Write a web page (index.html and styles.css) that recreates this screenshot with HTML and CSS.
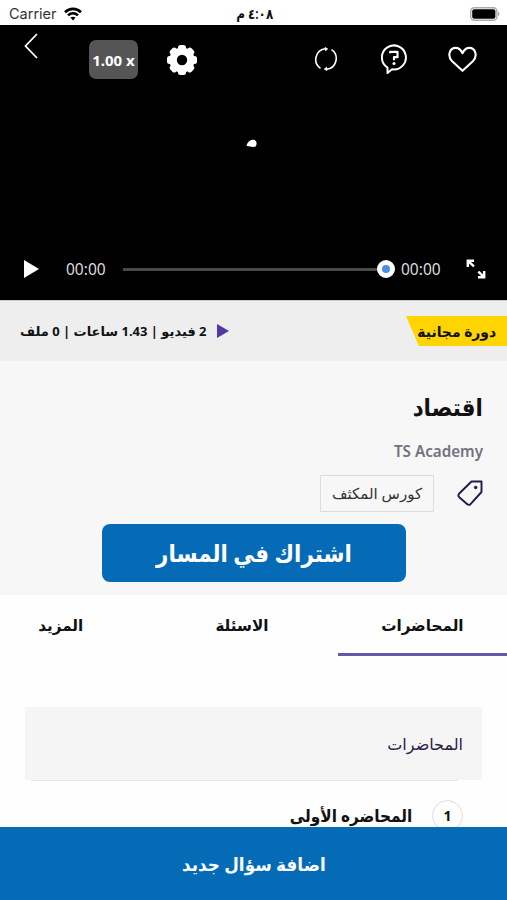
FILE: index.html
```html
<!DOCTYPE html>
<html lang="ar" dir="rtl">
<head>
  <meta charset="UTF-8">
  <meta name="viewport" content="width=device-width, initial-scale=1.0">
  <title>اقتصاد - TS Academy</title>
  <link rel="stylesheet" href="styles.css">
</head>
<body>
  <div class="app">
    <header class="status-bar" dir="ltr">
      <div class="carrier">
        <span>Carrier</span>
        <svg class="wifi" viewBox="0 0 18 14" fill="none" stroke="#000" stroke-width="2.6">
          <path d="M1 5.2C5.6.7 12.4.7 17 5.2"/>
          <path d="M4 8.4c3-2.7 7-2.7 10 0"/>
          <path d="M9 13.5l-2.6-2.9c1.5-1.3 3.7-1.3 5.2 0z" fill="#000" stroke="none"/>
        </svg>
      </div>
      <span class="clock" dir="rtl">٤:٠٨ م</span>
      <svg class="battery" viewBox="0 0 30 14">
        <rect x=".7" y=".7" width="26.2" height="12.6" rx="3.5" fill="#fff" stroke="#aaa" stroke-width="1.4"/>
        <rect x="2.2" y="2.2" width="23.2" height="9.6" rx="2" fill="#000"/>
        <path d="M28 4.8c1.9.5 1.9 3.9 0 4.4z" fill="#aaa"/>
      </svg>
    </header>

    <section class="player" dir="ltr">
      <div class="player-top">
        <svg class="icon-back" viewBox="0 0 14 26" fill="none" stroke="#fff" stroke-width="1.8">
          <path d="M13 1L1.5 13 13 25"/>
        </svg>
        <button class="speed-btn">1.00 x</button>
        <svg class="icon-gear" viewBox="0 0 30 30">
          <g fill="#fff">
            <circle cx="15" cy="15" r="12.6"/>
            <rect x="11" y="0" width="8" height="30" rx="2.5"/>
            <rect x="11" y="0" width="8" height="30" rx="2.5" transform="rotate(45 15 15)"/>
            <rect x="11" y="0" width="8" height="30" rx="2.5" transform="rotate(90 15 15)"/>
            <rect x="11" y="0" width="8" height="30" rx="2.5" transform="rotate(135 15 15)"/>
          </g>
          <circle cx="15" cy="15" r="5.2" fill="#000"/>
        </svg>
        <svg class="icon-refresh" viewBox="0 0 24 24" fill="none" stroke="#fff" stroke-width="1.6">
          <path d="M6.5 21.3A10.7 10.7 0 0 1 11.5 1.8"/>
          <path d="M17.5 2.7A10.7 10.7 0 0 1 12.5 22.2"/>
          <path d="M11 .6l2.6 1.3-2.1 1.8zM13 23.4l-2.6-1.3 2.1-1.8z" fill="#fff" stroke-width="1"/>
        </svg>
        <svg class="icon-question" viewBox="0 0 28 30" fill="none" stroke="#fff" stroke-width="2">
          <path d="M7.5 23.6A12 12 0 1 1 12 25.3L7.5 29z" stroke-linejoin="round"/>
          <path d="M10.2 9.3V7.8h7.3v5.4H14v3" stroke-width="2.2" stroke-linejoin="round"/>
          <circle cx="14" cy="19.5" r="1.5" fill="#fff" stroke="none"/>
        </svg>
        <svg class="icon-heart" viewBox="0 0 30 27" fill="none" stroke="#fff" stroke-width="2.2" stroke-linejoin="round">
          <path d="M15 25.2L4.3 15.4C-1 10 1.5 1.5 8 1.5c3.2 0 5.5 2.3 7 5.5 1.5-3.2 3.8-5.5 7-5.5 6.5 0 9 8.5 3.7 13.9z"/>
        </svg>
      </div>

      <svg class="spinner" viewBox="0 0 12 9" fill="#fff">
        <path d="M.5 6.8C1.5 3 4 .8 7 .8a3.600 3.600 0 0 1 0 7.200C5 8 3.500 7.300.5 6.800z"/>
      </svg>

      <div class="player-controls">
        <svg class="icon-play" viewBox="0 0 15 18" fill="#fff"><path d="M0 0l15 9L0 18z"/></svg>
        <span class="time">00:00</span>
        <div class="seek-bar"><span class="seek-thumb"></span></div>
        <span class="time">00:00</span>
        <svg class="icon-expand" viewBox="0 0 20 20" fill="none" stroke="#fff" stroke-width="2.4">
          <path d="M1.8 8V1.8H8M2 2l6 5.300M18.200 12v6.200H12M12.300 12.700l5.700 5.300"/>
        </svg>
      </div>
    </section>

    <section class="info-bar">
      <div class="free-badge"><span class="ar free-text">دورة مجانية</span></div>
      <div class="stats">
        <svg class="icon-stats" viewBox="0 0 12 14" fill="#5138a5"><path d="M0 0l12 7-12 7z"/></svg>
        <span class="ar stats-text">2 فيديو | 1.43 ساعات | 0 ملف</span>
      </div>
    </section>

    <section class="course">
      <h1 class="ar course-title">اقتصاد</h1>
      <p class="academy">TS Academy</p>
      <div class="tags">
        <svg class="icon-tag" viewBox="0 0 26 26" fill="none" stroke="#211a4b" stroke-width="1.9" stroke-linejoin="round">
          <path d="M14.5 1.5H24.500V12L13.500 24.200Q11.700 25.600 10 24L2 17Q.7 15.500 2 13.800z"/>
          <circle cx="18.700" cy="7.500" r="1.300" fill="#211a4b" stroke-width="1"/>
        </svg>
        <span class="tag"><span class="ar tag-text">كورس المكثف</span></span>
      </div>
      <button class="subscribe-btn"><span class="ar subscribe-text">اشتراك في المسار</span></button>
    </section>

    <nav class="tabs">
      <a class="tab active"><span class="ar tab-text">المحاضرات</span></a>
      <a class="tab"><span class="ar tab-text">الاسئلة</span></a>
      <a class="tab"><span class="ar tab-text">المزيد</span></a>
    </nav>

    <main class="lectures">
      <div class="lectures-header"><span class="ar header-text">المحاضرات</span></div>
      <div class="lecture">
        <span class="lecture-number">1</span>
        <span class="ar lecture-title">المحاضره الأولى</span>
      </div>
    </main>

    <button class="ask-btn"><span class="ar ask-text">اضافة سؤال جديد</span></button>
  </div>
</body>
</html>
```
FILE: styles.css
```css
* {
  margin: 0;
  padding: 0;
  box-sizing: border-box;
}

body {
  font-family: "Noto Sans", "DejaVu Sans", sans-serif;
  background: #fefefe;
  color: #111;
}

button {
  border: none;
  font-family: inherit;
}

svg {
  display: block;
  flex: none;
}

.app {
  height: 900px;
  display: flex;
  flex-direction: column;
  overflow: hidden;
}

/* Arabic labels, slightly condensed where needed */
.ar {
  display: inline-block;
  white-space: nowrap;
  transform-origin: center;
}

/* Status bar */
.status-bar {
  height: 25px;
  flex: none;
  display: grid;
  grid-template-columns: 1fr auto 1fr;
  align-items: center;
  padding: 2px 7px 0 9px;
  background: #fff;
}

.carrier {
  display: flex;
  align-items: center;
  gap: 7px;
  font-family: Inter, sans-serif;
  font-size: 14.5px;
  color: #333;
}

.wifi {
  width: 18px;
  height: 14px;
}

.clock {
  font-size: 14px;
  font-weight: 600;
  transform: scaleX(0.85);
}

.battery {
  width: 30px;
  height: 14px;
  justify-self: end;
}

/* Player */
.player {
  height: 275px;
  flex: none;
  background: #000;
  color: #fff;
  display: flex;
  flex-direction: column;
}

.player-top {
  display: flex;
  align-items: center;
  padding: 8px 30px 0 24px;
}

.icon-back {
  width: 14px;
  height: 26px;
  align-self: flex-start;
}

.speed-btn {
  width: 49px;
  height: 39px;
  margin: 7px 0 0 51px;
  border-radius: 7px;
  background: #555;
  color: #fff;
  font-size: 15px;
  font-weight: 700;
  white-space: nowrap;
}

.icon-gear {
  width: 30px;
  height: 30px;
  margin: 7px auto 0 29px;
}

.icon-refresh {
  width: 24px;
  height: 24px;
  margin-top: 6px;
}

.icon-question {
  width: 28px;
  height: 30px;
  margin: 6px 0 0 42px;
}

.icon-heart {
  width: 29px;
  height: 27px;
  margin: 6px 0 0 40px;
}

.spinner {
  width: 12px;
  height: 9px;
  margin: 60px 0 0 246px;
}

.player-controls {
  display: flex;
  align-items: center;
  height: 62px;
  margin-top: auto;
  padding: 0 21px 0 24px;
}

.icon-play {
  width: 15px;
  height: 18px;
  margin-right: 27px;
}

.time {
  width: 40px;
  font-size: 15.5px;
  color: #ddd;
}

.seek-bar {
  flex: 1;
  display: flex;
  align-items: center;
  justify-content: flex-end;
  height: 3px;
  margin: 0 6px 0 17px;
  background: #4a4a4a;
}

.seek-thumb {
  width: 18px;
  height: 18px;
  border: 5px solid #fff;
  border-radius: 50%;
  background: #4a8fe2;
}

.icon-expand {
  width: 20px;
  height: 20px;
  margin-left: 25px;
}

/* Course info */
.info-bar {
  height: 61px;
  flex: none;
  display: flex;
  align-items: center;
  justify-content: space-between;
  padding-left: 20px;
  border-top: 1px solid #ccc;
  background: #eee;
}

.free-badge {
  width: 101px;
  height: 30px;
  padding-right: 11px;
  display: flex;
  align-items: center;
  background: #ffd400;
  clip-path: polygon(0 0, 100% 0, 100% 100%, 13px 100%);
}

.free-text {
  font-size: 14.5px;
  font-weight: 700;
  transform: scaleX(0.96);
  transform-origin: right;
}

.stats {
  display: flex;
  align-items: center;
  gap: 10px;
}

.icon-stats {
  width: 12px;
  height: 14px;
}

.stats-text {
  font-size: 13px;
  font-weight: 700;
}

.course {
  height: 234px;
  flex: none;
  display: flex;
  flex-direction: column;
  padding: 26px 24px 0;
  background: #f7f7f7;
}

.course-title {
  height: 42px;
  line-height: 40px;
  font-size: 24px;
  align-self: flex-start;
  transform: scaleX(0.89);
  transform-origin: right;
}

.academy {
  height: 44px;
  line-height: 44px;
  font-size: 16px;
  font-weight: 600;
  color: #73717f;
  transform: scaleX(0.95);
  transform-origin: right;
}

.tags {
  display: flex;
  align-items: center;
  gap: 23px;
  height: 40px;
}

.icon-tag {
  width: 26px;
  height: 26px;
}

.tag {
  width: 114px;
  height: 37px;
  display: flex;
  align-items: center;
  justify-content: center;
  border: 1px solid #ddd;
  color: #333;
}

.tag-text {
  font-size: 15px;
}

.subscribe-btn {
  width: 304px;
  height: 58px;
  margin-top: 11px;
  padding-bottom: 2px;
  align-self: center;
  border-radius: 8px;
  background: #066bb7;
  color: #fff;
  font-size: 24px;
  font-weight: 700;
}

.subscribe-text {
  transform: scaleX(0.89);
}

/* Tabs */
.tabs {
  height: 61px;
  flex: none;
  display: grid;
  grid-template-columns: 169px 192px 1fr;
}

.tab {
  display: flex;
  justify-content: center;
  padding-top: 19px;
  font-size: 16px;
  font-weight: 700;
}

.tab:last-child {
  padding-right: 24px;
}

.tab.active {
  border-bottom: 3px solid #6655ad;
}

.tab-text {
  transform: scaleX(0.95);
}

/* Lectures */
.lectures {
  flex: 1;
  min-height: 0;
  overflow: hidden;
  padding: 51px 25px 0;
}

.lectures-header {
  height: 73px;
  display: flex;
  align-items: center;
  padding-right: 19px;
  background: #f5f5f5;
  color: #28214b;
}

.header-text {
  font-size: 16px;
}

.lecture {
  display: flex;
  align-items: flex-start;
  gap: 20px;
  margin: 0 24px 0 6px;
  padding-top: 19px;
  border-top: 1px solid #e6e6e6;
}

.lecture-number {
  width: 31px;
  height: 31px;
  margin-right: -5px;
  border: 1px solid #ddd;
  border-radius: 50%;
  text-align: center;
  line-height: 30px;
  font-size: 14px;
  font-weight: 700;
}

.lecture-title {
  padding-top: 4px;
  font-size: 17px;
  font-weight: 700;
  transform: scaleX(0.9);
  transform-origin: right;
}

.ask-btn {
  height: 73px;
  flex: none;
  background: #066bb7;
  color: #fff;
  font-size: 18px;
  font-weight: 700;
}

.ask-text {
  transform: scaleX(0.935);
}
```
